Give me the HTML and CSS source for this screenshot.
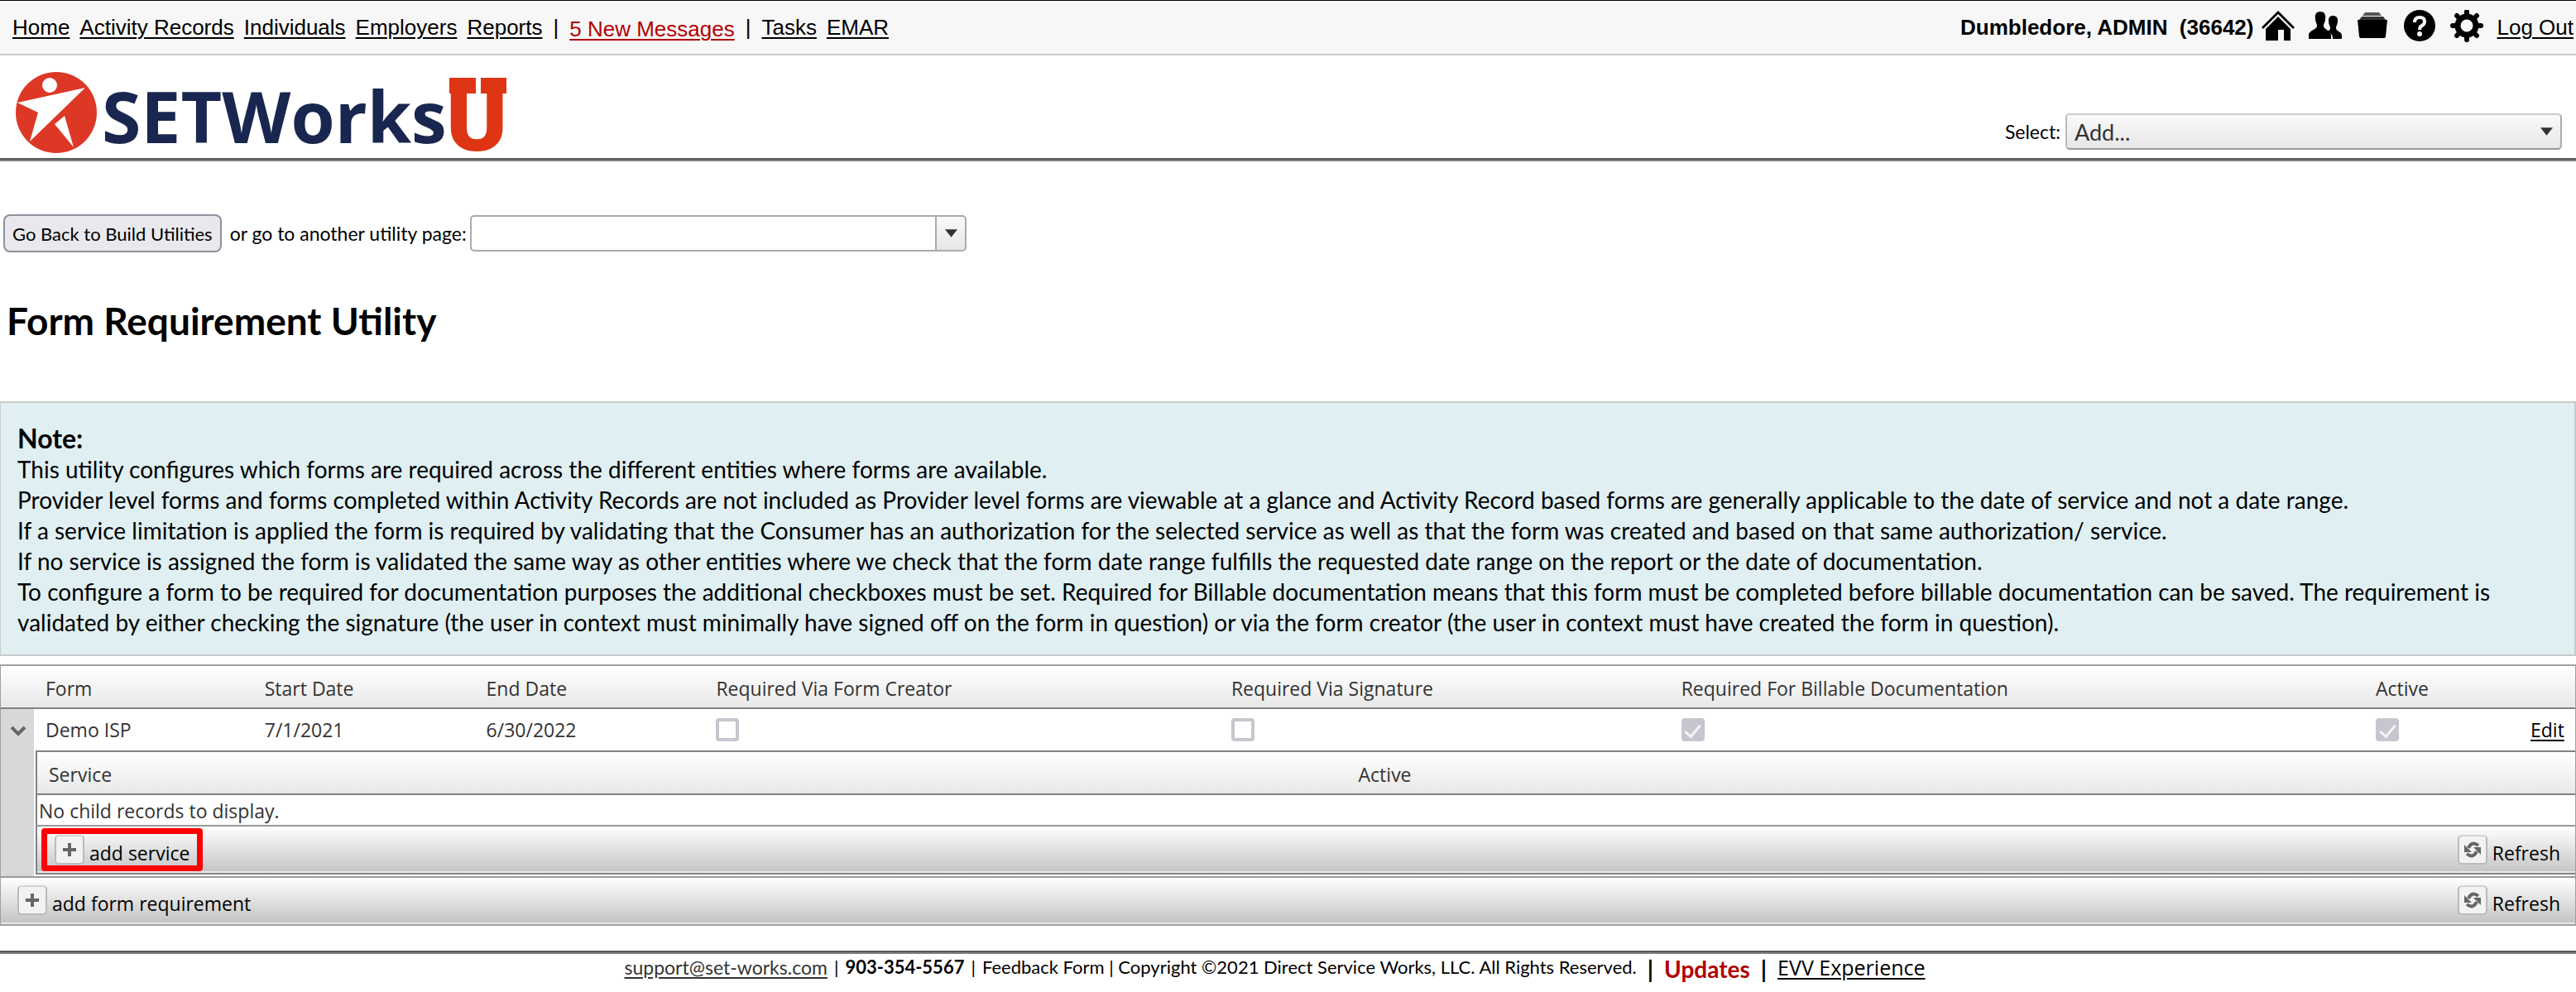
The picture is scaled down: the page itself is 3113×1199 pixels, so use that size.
FILE: index.html
```html
<!DOCTYPE html>
<html lang="en">
<head>
  <meta charset="UTF-8">
  <meta name="viewport" content="width=device-width, initial-scale=1.0">
  <title>Form Requirement Utility</title>
  <link rel="stylesheet" href="styles.css">
</head>
<body>
  <div class="topbar">
    <nav class="nav">
      <a href="#">Home</a>
      <a href="#">Activity Records</a>
      <a href="#">Individuals</a>
      <a href="#">Employers</a>
      <a href="#">Reports</a>
      <span class="sep">|</span>
      <a href="#" class="messages">5 New Messages</a>
      <span class="sep">|</span>
      <a href="#">Tasks</a>
      <a href="#">EMAR</a>
    </nav>
    <div class="user">
      <span class="user-name">Dumbledore, ADMIN&nbsp; (36642)</span>
      <div class="icons">
        <a href="#" aria-label="Home"><svg viewBox="0 0 40 40"><path d="M20 1 0 21l2 2L20 5l18 18 2-2z"/><path d="M20 8 5 23v14h15V24h7v13h8V23z"/></svg></a>
        <a href="#" aria-label="People"><svg viewBox="0 0 40 40"><path d="M14 2c-5 0-7 4-6 9 0 4 2 5 2 8 0 5-9 5-10 11v5h27v-5c-1-6-9-6-9-11 0-3 2-4 2-8 1-5-1-9-6-9z"/><path d="M29 7c-3 0-5 2-5 6 0 5 2 6 2 9 0 2-2 3-3 4 4 2 6 4 6 9h11v-4c0-5-7-5-7-9 0-3 2-4 2-9 0-4-2-6-6-6z"/></svg></a>
        <a href="#" aria-label="Files"><svg viewBox="0 0 40 40"><path d="M11 3h17l3 4H8z" fill="#555"/><path d="M7 8h26l3 4H4z" fill="#333"/><path d="M2 12h36l-2 20q0 2-2 2H6q-2 0-2-2z"/></svg></a>
        <a href="#" aria-label="Help"><svg viewBox="0 0 40 40"><circle cx="20" cy="19" r="19"/><path d="M14 15q0-6 6-6t6 5q0 3-3 5-3 1-3 5" fill="none" stroke="#f7f7f7" stroke-width="4"/><circle cx="20" cy="29" r="3" fill="#f7f7f7"/></svg></a>
        <a href="#" aria-label="Settings"><svg viewBox="0 0 40 40"><circle cx="20" cy="19" r="11" fill="none" stroke="#000" stroke-width="7"/><path d="M20 2v5M20 31v5M3 19h5M32 19h5M8 7l4 4M28 27l4 4M32 7l-4 4M12 27l-4 4" stroke="#000" stroke-width="6" stroke-linecap="round"/></svg></a>
      </div>
      <a href="#">Log Out</a>
    </div>
  </div>

  <header class="header">
    <svg class="logo" viewBox="0 0 620 100" role="img" aria-label="SETWorks U">
      <ellipse cx="49" cy="50" rx="49" ry="49" fill="#dd3826"/>
      <ellipse cx="41" cy="17" rx="9" ry="9" fill="#fff"/>
      <path d="M2 38 84 20 17 85l10-35z" fill="#fff"/>
      <path d="m59 54 11 38-23-28z" fill="#fff"/>
      <text x="104" y="87" class="logo-text">SETWorks</text>
      <text x="520" y="96" class="logo-u">U</text>
      <path d="M524 8h32v19h-32zM562 8h31v19h-31z" fill="#de3614"/>
    </svg>
    <div class="quick-add">
      <label for="quickAdd">Select:</label>
      <div class="combo combo-grey">
        <select id="quickAdd"><option>Add...</option></select>
        <svg class="arrow" viewBox="0 0 16 10"><path d="M0 0h16L8 10z"/></svg>
      </div>
    </div>
  </header>

  <main>
    <div class="goto">
      <button type="button" class="back">Go Back to Build Utilities</button>
      <label for="utilityPage">or go to another utility page:</label>
      <div class="combo combo-split">
        <select id="utilityPage"><option></option></select>
        <svg class="arrow" viewBox="0 0 16 10"><path d="M0 0h16L8 10z"/></svg>
      </div>
    </div>

    <h1>Form Requirement Utility</h1>

    <div class="note">
      <h2>Note:</h2>
      <p>This utility configures which forms are required across the different entities where forms are available.</p>
      <p>Provider level forms and forms completed within Activity Records are not included as Provider level forms are viewable at a glance and Activity Record based forms are generally applicable to the date of service and not a date range.</p>
      <p>If a service limitation is applied the form is required by validating that the Consumer has an authorization for the selected service as well as that the form was created and based on that same authorization/ service.</p>
      <p>If no service is assigned the form is validated the same way as other entities where we check that the form date range fulfills the requested date range on the report or the date of documentation.</p>
      <p>To configure a form to be required for documentation purposes the additional checkboxes must be set. Required for Billable documentation means that this form must be completed before billable documentation can be saved. The requirement is validated by either checking the signature (the user in context must minimally have signed off on the form in question) or via the form creator (the user in context must have created the form in question).</p>
    </div>

    <div class="grid">
      <table class="forms">
        <colgroup>
          <col class="c-expand"><col class="c-form"><col class="c-start"><col class="c-end"><col class="c-creator"><col class="c-signature"><col class="c-billable"><col class="c-active"><col>
        </colgroup>
        <thead>
          <tr>
            <th></th><th>Form</th><th>Start Date</th><th>End Date</th><th>Required Via Form Creator</th><th>Required Via Signature</th><th>Required For Billable Documentation</th><th>Active</th><th></th>
          </tr>
        </thead>
        <tbody>
          <tr>
            <td class="expand" rowspan="2"><button type="button" aria-label="Collapse"><svg viewBox="0 0 20 12"><path d="m2 2 8 8 8-8" fill="none" stroke="#666" stroke-width="4"/></svg></button></td>
            <td>Demo ISP</td>
            <td>7/1/2021</td>
            <td>6/30/2022</td>
            <td><input type="checkbox" aria-label="Required Via Form Creator" disabled></td>
            <td><input type="checkbox" aria-label="Required Via Signature" disabled></td>
            <td><input type="checkbox" aria-label="Required For Billable Documentation" checked disabled></td>
            <td><input type="checkbox" aria-label="Active" checked disabled></td>
            <td><a href="#">Edit</a></td>
          </tr>
          <tr>
            <td class="child" colspan="8">
              <table class="services">
                <colgroup><col class="c-service"><col></colgroup>
                <thead>
                  <tr><th>Service</th><th>Active</th></tr>
                </thead>
                <tbody>
                  <tr><td class="empty" colspan="2">No child records to display.</td></tr>
                </tbody>
              </table>
              <div class="commands">
                <button type="button" class="command highlight"><span class="box"><svg viewBox="0 0 20 20"><path d="M10 2v16M2 10h16" stroke="#666" stroke-width="4"/></svg></span><span class="text">add service</span></button>
                <button type="button" class="command"><span class="box"><svg viewBox="0 0 20 20"><path d="M17 5Q9-1 5 8M3 15q8 6 12-3" fill="none" stroke="#666" stroke-width="4"/><path d="M0 4v9h9zM20 16V7h-9z" fill="#666"/></svg></span><span class="text">Refresh</span></button>
              </div>
            </td>
          </tr>
        </tbody>
      </table>
      <div class="commands">
        <button type="button" class="command"><span class="box"><svg viewBox="0 0 20 20"><path d="M10 2v16M2 10h16" stroke="#666" stroke-width="4"/></svg></span><span class="text">add form requirement</span></button>
        <button type="button" class="command"><span class="box"><svg viewBox="0 0 20 20"><path d="M17 5Q9-1 5 8M3 15q8 6 12-3" fill="none" stroke="#666" stroke-width="4"/><path d="M0 4v9h9zM20 16V7h-9z" fill="#666"/></svg></span><span class="text">Refresh</span></button>
      </div>
    </div>
  </main>

  <footer class="footer">
    <a href="#" class="support">support@set-works.com</a>
    <span>|</span>
    <b>903-354-5567</b>
    <span>|</span>
    <span>Feedback Form | Copyright ©2021 Direct Service Works, LLC. All Rights Reserved.</span>
    <span class="bar">|</span>
    <a href="#" class="updates">Updates</a>
    <span class="bar">|</span>
    <a href="#" class="evv">EVV Experience</a>
  </footer>
</body>
</html>
```
FILE: styles.css
```css
* {
  box-sizing: border-box;
}

body {
  margin: 0;
  background: #fff;
  color: #000;
  font-family: Lato, sans-serif;
  font-size: 22px;
}

a {
  color: #000;
  text-underline-offset: 3px;
}

button,
select {
  font-family: inherit;
  font-size: inherit;
}

label {
  font-size: 23px;
}

/* top bar */
.topbar {
  display: flex;
  justify-content: space-between;
  height: 67px;
  padding: 0 3px 0 15px;
  background: #f7f7f7;
  border-top: 1px solid #000;
  border-bottom: 2px solid #c8c8c8;
  font-family: "Liberation Sans", Arial, sans-serif;
  font-size: 26px;
  line-height: 64px;
}

.topbar a {
  text-decoration-thickness: 2px;
}

.nav {
  display: flex;
  gap: 12px;
}

.nav .sep {
  padding: 0 1px;
}

.nav .messages {
  color: #b00000;
  padding-top: 2px;
}

.user {
  display: flex;
}

.user-name {
  font-weight: bold;
}

.icons {
  display: flex;
  gap: 17px;
  padding: 11px 16px 0 10px;
}

.icons a,
.icons svg {
  display: block;
  width: 40px;
  height: 40px;
}

/* logo header */
.header {
  display: flex;
  justify-content: space-between;
  align-items: flex-start;
  height: 128px;
  padding: 19px 17px 0 19px;
  border-bottom: 2px solid #808080;
  box-shadow: inset 0 -2px #585858;
}

.logo {
  width: 620px;
  height: 100px;
  overflow: visible;
}

.logo-text {
  font-family: "Open Sans", sans-serif;
  font-size: 86px;
  font-weight: bold;
  fill: #19264f;
}

.logo-u {
  font-family: Roboto, sans-serif;
  font-size: 112px;
  font-weight: 900;
  fill: #de3614;
}

.quick-add {
  display: flex;
  align-items: center;
  gap: 6px;
  padding-top: 51px;
}

.combo {
  position: relative;
  width: 600px;
  height: 44px;
}

.combo select {
  width: 100%;
  height: 100%;
  padding: 0 9px;
  appearance: none;
  border: 2px solid #aaa;
  border-radius: 5px;
  background: #fff;
  color: #333;
  font-size: 27px;
}

.combo-grey select {
  border-color: #ccc #aaa #999 #bbb;
  background: linear-gradient(#fafafa, #e6e6e6);
}

.combo-split select {
  background: linear-gradient(#aaa, #aaa) right 34px top / 2px 100% no-repeat, linear-gradient(#fafafa, #e6e6e6) right / 34px 100% no-repeat, #fff;
}

.combo .arrow {
  position: absolute;
  right: 11px;
  top: 17px;
  width: 15px;
  height: 10px;
  fill: #333;
}

/* utility navigation */
.goto {
  display: flex;
  align-items: center;
  padding: 64px 0 0 4px;
}

.back {
  height: 46px;
  margin-right: 10px;
  padding: 0 9px;
  border: 2px solid #8f8f9d;
  border-radius: 8px;
  background: #e9e9ed;
}

.goto .combo {
  margin-left: 4px;
}

h1 {
  margin: 58px 0 0 8px;
  font-size: 46px;
  line-height: 50px;
}

.note {
  margin-top: 72px;
  padding: 24px 20px 20px;
  border: 2px solid #c8cccc;
  border-left-width: 1px;
  background: #dfeff2;
  font-size: 28px;
  line-height: 37px;
}

.note h2 {
  margin: 0;
  font-size: 32px;
  line-height: 38px;
}

.note p {
  margin: 0;
}

/* grid */
.grid {
  margin-top: 10px;
  border: 2px solid #a0a0a0;
  border-left-width: 1px;
  border-right-width: 1px;
  font-family: "Open Sans", "Segoe UI", sans-serif;
  font-size: 23px;
  color: #333;
}

table {
  width: 100%;
  border-collapse: separate;
  border-spacing: 0;
  table-layout: fixed;
}

th {
  height: 52px;
  padding: 3px 14px 0;
  border-bottom: 2px solid #828282;
  background: linear-gradient(#fff, #e8e8e8);
  font-weight: normal;
  text-align: left;
}

td {
  height: 50px;
  padding: 0 14px;
}

.c-expand { width: 40px; }
.c-form { width: 8.51%; }
.c-start { width: 8.61%; }
.c-end { width: 8.93%; }
.c-creator { width: 20.01%; }
.c-signature { width: 17.48%; }
.c-billable { width: 26.98%; }
.c-active { width: 6.01%; }
.c-service { width: 51.6%; }

.expand {
  padding: 19px 0 0 11px;
  background: #d8d8d8;
  vertical-align: top;
}

.expand button {
  display: block;
  padding: 0;
  border: 0;
  background: none;
}

.expand svg {
  display: block;
  width: 20px;
  height: 14px;
}

.child {
  padding: 0 0 2px 2px;
}

.services {
  border: solid #828282;
  border-width: 2px 0 0 2px;
}

.services .empty {
  height: 36px;
  padding: 2px 2px 0;
}

input[type="checkbox"] {
  display: block;
  width: 28px;
  height: 28px;
  margin: 0;
  appearance: none;
  border: 4px solid #c6c6ce;
  border-radius: 4px;
  background: #fff;
}

input[type="checkbox"]:checked {
  background: #c6c6ce;
}

input[type="checkbox"]:checked::after {
  content: "";
  display: block;
  width: 8px;
  height: 16px;
  margin: 0 auto;
  border: solid #f4f4f4;
  border-width: 0 3px 3px 0;
  transform: rotate(40deg);
}

.commands {
  display: flex;
  justify-content: space-between;
  align-items: center;
  height: 58px;
  padding: 0 18px 0 20px;
  border-top: 2px solid #999;
  border-bottom: 2px solid #e8e8e8;
  background: linear-gradient(#fff, #c4c4c4);
}

.child .commands {
  height: 60px;
  padding: 0 18px 0 5px;
  border-left: 2px solid #828282;
  border-bottom-color: #828282;
  box-shadow: inset 0 -2px #e8e8e8;
}

.command {
  display: flex;
  align-items: center;
  gap: 6px;
  padding: 0;
  border: 0;
  background: none;
}

.command .text {
  padding-top: 7px;
  line-height: 30px;
}

.highlight {
  height: 52px;
  padding: 0 9px;
  border: 7px solid #f00;
  border-radius: 4px;
}

.box {
  display: flex;
  align-items: center;
  justify-content: center;
  width: 36px;
  height: 36px;
  border: 2px solid #bbb;
  border-top-color: #d4d4d4;
  border-radius: 5px;
  background: #f2f2f2;
}

.box svg {
  width: 20px;
  height: 20px;
}

/* page footer */
.footer {
  display: flex;
  justify-content: center;
  align-items: center;
  gap: 8px;
  margin-top: 30px;
  padding: 1px 32px 8px 0;
  border-top: 2px solid #585858;
  box-shadow: inset 0 2px #808080;
  line-height: 30px;
}

.support {
  color: #333;
  font-size: 23px;
}

.bar,
.updates {
  padding-top: 4px;
  font-size: 28px;
  font-weight: bold;
}

.bar {
  padding-left: 5px;
  padding-right: 5px;
}

.updates {
  color: #b00000;
  text-decoration: none;
}

.evv {
  font-family: "Open Sans", sans-serif;
  font-size: 25px;
}
```
